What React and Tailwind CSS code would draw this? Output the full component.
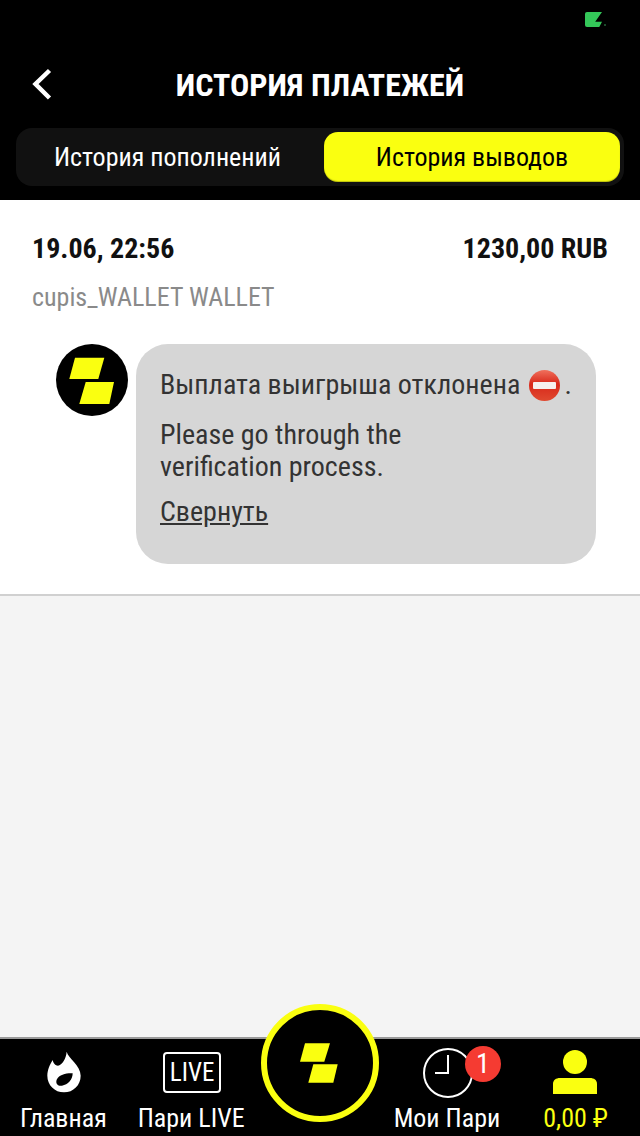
import React from 'react';

const font = "font-['Roboto',sans-serif] font-stretch-[75%]";

function Logo({ className }) {
  return (
    <svg viewBox="0 0 72 72" className={className}>
      <polygon points="19,13.700 48.300,13.700 42.300,35 13.300,35" fill="#faff10" />
      <polygon points="29.700,38 58,38 53.300,60 23.300,60" fill="#faff10" />
    </svg>
  );
}

function NavItem({ label, active, className = '', children }) {
  return (
    <div className={`flex flex-col items-center ${className}`}>
      <div className="h-[63px] flex items-end justify-center relative">{children}</div>
      <span className={`text-[26px] leading-[32px] whitespace-nowrap ${active ? 'text-[#faff10]' : 'text-white'}`}>{label}</span>
    </div>
  );
}

export default function App() {
  return (
    <div className={`w-[640px] h-[1136px] flex flex-col bg-[#f4f4f4] relative overflow-hidden ${font}`}>
      <header className="bg-black h-[200px] flex flex-col relative">
        <div className="h-[128px] flex items-end pb-[25px] justify-center relative">
          <svg viewBox="0 0 50 50" className="absolute left-[20px] top-[60px] w-[50px] h-[50px]">
            <path d="M29.500 10.500 L15.500 24 L29.500 38" fill="none" stroke="#fff" strokeWidth="4.5" />
          </svg>
          <h1 className="text-white text-[32px] leading-[36px] font-bold">ИСТОРИЯ ПЛАТЕЖЕЙ</h1>
        </div>
        <div className="mx-[16px] h-[58px] rounded-[16px] bg-[#111111] flex items-center pr-[4px]">
          <div className="flex-1 text-center text-white text-[26px] pr-[5px]">История пополнений</div>
          <div className="w-[296px] h-[50px] rounded-[14px] bg-[#faff10] text-black text-[26px] flex items-center justify-center shadow-[inset_0_-1px_1px_rgba(0,0,0,0.25)]">История выводов</div>
        </div>
        <div className="absolute left-[585px] top-[12px] w-[17px] h-[15px] bg-[#34c759] rounded-l-[2px] [clip-path:polygon(0_0,100%_0,60%_65%,100%_65%,84%_100%,0_100%)]" />
        <div className="absolute left-[604px] top-[24px] w-[2px] h-[2px] bg-[#1c4a2a]" />
      </header>

      <section className="bg-white h-[396px] border-b-2 border-[#d0d0d0] px-[32px] pt-[31px]">
        <div className="flex justify-between items-center text-[28px] leading-[36px] font-bold text-[#111]">
          <span>19.06, 22:56</span>
          <span>1230,00 RUB</span>
        </div>
        <div className="mt-[14px] text-[26px] leading-[32px] text-[#8a8a8a]">cupis_WALLET WALLET</div>
        <div className="flex mt-[31px] ml-[24px] gap-[8px]">
          <div className="w-[72px] h-[72px] rounded-full bg-black shrink-0">
            <Logo className="w-[72px] h-[72px]" />
          </div>
          <div className="w-[460px] h-[220px] bg-[#d6d6d6] rounded-[32px] px-[24px] pt-[25px] text-[#333] text-[28px]">
            <p className="leading-[32px] flex items-center whitespace-nowrap">
              Выплата выигрыша отклонена
              <span className="ml-[9px] w-[31px] h-[31px] rounded-full bg-[linear-gradient(#f0705c,#d8281a_45%,#e04a30)] flex items-center justify-center">
                <span className="w-[23px] h-[7px] bg-[#f6f0ee] rounded-[1px]" />
              </span>
              <span className="ml-[5px]">.</span>
            </p>
            <p className="mt-[18px] leading-[32px]">Please go through the<br />verification process.</p>
            <p className="mt-[13px] leading-[32px] underline">Свернуть</p>
          </div>
        </div>
      </section>

      <div className="flex-1" />

      <nav className="h-[99px] bg-black border-t-2 border-[#999] flex text-center pl-[20px]">
        <NavItem label="Главная">
          <svg viewBox="0 0 150 165" className="w-[50px] h-[55px] mb-[2px] ml-[3px]">
            <path
              fillRule="evenodd"
              fill="#fff"
              d="M80 20 C84 40 122 60 122 92 C122 120 100 142 72 142 C44 142 22 120 22 92 C22 75 30 58 38 45 C40 55 46 62 54 62 C66 60 78 42 80 20 Z M98 85 C80 84 58 88 50 104 C46 116 54 124 66 122 C84 120 98 104 98 85 Z"
            />
          </svg>
        </NavItem>
        <NavItem label="Пари LIVE" className="ml-[31px]">
          <div className="w-[58px] h-[41px] ml-[2px] border-2 border-white rounded-[4px] text-white text-[25px] leading-[37px] text-center mb-[9px]">LIVE</div>
        </NavItem>
        <NavItem label="Мои Пари" className="ml-[149px]">
          <svg viewBox="0 0 50 50" className="w-[50px] h-[50px] mb-[4px] ml-[2px]">
            <circle cx="25" cy="25" r="24" fill="none" stroke="#fff" strokeWidth="2" />
            <path d="M25 7 V25 H12" fill="none" stroke="#fff" strokeWidth="2" />
          </svg>
          <span className="absolute left-[44px] top-[7px] w-[36px] h-[36px] rounded-full bg-[#f53b32] text-white text-[28px] leading-[36px] text-center">1</span>
        </NavItem>
        <NavItem label="0,00 ₽" active className="ml-[43px]">
          <svg viewBox="0 0 44 44" className="w-[44px] h-[44px] mb-[8px] mr-[2px]">
            <circle cx="22" cy="12" r="12" fill="#faff10" />
            <path d="M0 44 V34 C0 30 3 28 7 28 H37 C41 28 44 30 44 34 V44 Z" fill="#faff10" />
          </svg>
        </NavItem>
      </nav>

      <div className="absolute left-[261px] top-[1004px] w-[118px] h-[118px] rounded-full bg-black border-[6px] border-[#faff10] flex items-center justify-center">
        <svg viewBox="0 0 40 40" className="w-[40px] h-[40px]">
          <polygon points="5,0.300 30,0.300 24.300,18.700 0,18.700" fill="#faff10" />
          <polygon points="13.300,21.300 37.700,21.300 33.300,39.700 8.300,39.700" fill="#faff10" />
        </svg>
      </div>
    </div>
  );
}
